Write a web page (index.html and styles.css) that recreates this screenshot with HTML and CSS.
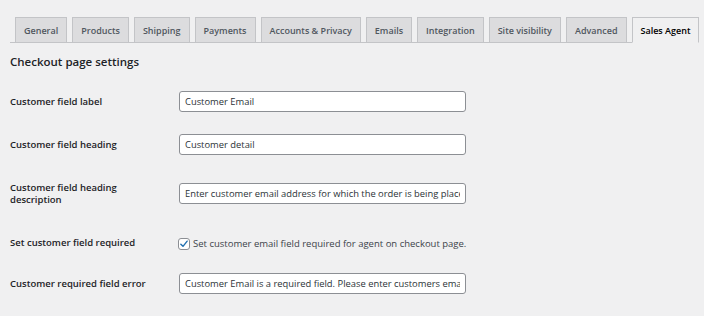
FILE: index.html
```html
<!DOCTYPE html>
<html lang="en">
<head>
<meta charset="utf-8">
<title>Sales Agent settings</title>
<link rel="stylesheet" href="styles.css">
</head>
<body>
<div class="wrap">
  <nav class="tabs">
    <a class="tab">General</a>
    <a class="tab">Products</a>
    <a class="tab">Shipping</a>
    <a class="tab">Payments</a>
    <a class="tab">Accounts &amp; Privacy</a>
    <a class="tab">Emails</a>
    <a class="tab">Integration</a>
    <a class="tab">Site visibility</a>
    <a class="tab">Advanced</a>
    <a class="tab active">Sales Agent</a>
  </nav>
  <h2 class="title">Checkout page settings</h2>
  <div class="form">
    <div class="row">
      <label class="th">Customer field label</label>
      <div class="td"><input class="text" type="text" value="Customer Email"></div>
    </div>
    <div class="row">
      <label class="th">Customer field heading</label>
      <div class="td"><input class="text" type="text" value="Customer detail"></div>
    </div>
    <div class="row">
      <label class="th th-two">Customer field heading description</label>
      <div class="td"><input class="text" type="text" value="Enter customer email address for which the order is being placed."></div>
    </div>
    <div class="row row-check">
      <label class="th">Set customer field required</label>
      <div class="td">
        <label class="check">
          <span class="box"><svg viewBox="0 0 12 12" width="10" height="10"><path d="M2.2 6.2 L4.8 8.8 L9.8 2.6" fill="none" stroke="#2271b1" stroke-width="1.7" stroke-linecap="round" stroke-linejoin="round"/></svg></span>
          <span class="check-text">Set customer email field required for agent on checkout page.</span>
        </label>
      </div>
    </div>
    <div class="row">
      <label class="th">Customer required field error</label>
      <div class="td"><input class="text" type="text" value="Customer Email is a required field. Please enter customers email address."></div>
    </div>
  </div>
</div>
</body>
</html>
```
FILE: styles.css
```css
html, body {
  margin: 0;
  padding: 0;
  background: #f0f0f1;
  font-family: "Open Sans", "Noto Sans", sans-serif;
  color: #3c434a;
}

.wrap {
  padding: 17px 7px 0 10px;
}

.tabs {
  display: flex;
  gap: 5px;
  padding-left: 5px;
  border-bottom: 1px solid #c3c4c7;
  height: 25px;
}

.tab {
  box-sizing: border-box;
  height: 26px;
  display: flex;
  align-items: center;
  padding: 0 8px;
  background: #dcdcde;
  border: 1px solid #c3c4c7;
  color: #50575e;
  font-size: 9px;
  font-weight: 600;
  white-space: nowrap;
}

.tab.active {
  background: #f0f0f1;
  border-bottom-color: #f0f0f1;
  color: #000;
}

.title {
  margin: 12px 0 11px;
  font-size: 11.5px;
  line-height: 14px;
  font-weight: 600;
  color: #1d2327;
}

.row {
  display: grid;
  grid-template-columns: 169px 287px;
}

.th {
  align-self: center;
  padding: 15px 20px 15px 0;
  font-size: 9.5px;
  line-height: 12px;
  font-weight: 600;
  color: #1d2327;
}

.th-two {
  position: relative;
  top: 1px;
}

.td {
  align-self: center;
  padding: 11px 0;
}

.row-check .th,
.row-check .td {
  position: relative;
  top: 2px;
}

.text {
  box-sizing: border-box;
  display: block;
  width: 287px;
  height: 21px;
  margin: 0;
  padding: 0 5px;
  border: 1px solid #8c8f94;
  border-radius: 3px;
  background: #fff;
  font-family: "Open Sans", "Noto Sans", sans-serif;
  font-size: 9.4px;
  color: #2c3338;
  outline: none;
}

.check {
  display: flex;
  align-items: center;
  gap: 3px;
  height: 12px;
  padding-top: 1px;
}

.box {
  box-sizing: border-box;
  width: 12px;
  height: 12px;
  border: 1px solid #8c8f94;
  border-radius: 3px;
  background: #fff;
  display: flex;
  align-items: center;
  justify-content: center;
  margin-left: -1px;
}

.check-text {
  font-size: 9.5px;
  color: #3c434a;
  white-space: nowrap;
}
```
